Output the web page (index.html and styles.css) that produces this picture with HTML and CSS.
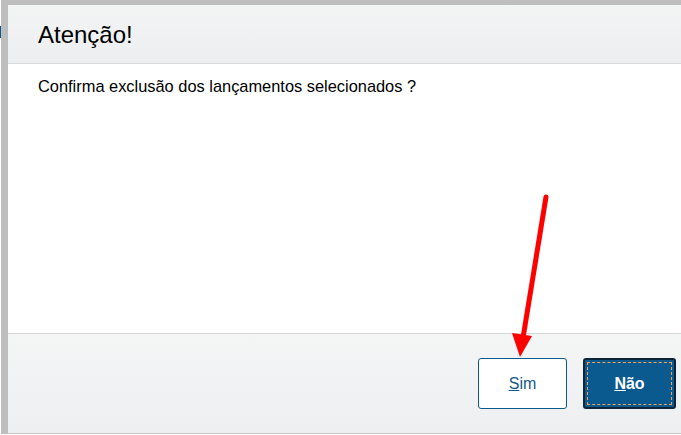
FILE: index.html
```html
<!DOCTYPE html>
<html lang="pt-BR">
<head>
  <meta charset="UTF-8">
  <title>Atenção!</title>
  <link rel="stylesheet" href="styles.css">
</head>
<body>
  <div class="page">
    <div class="edge"><span class="edge-mark"></span></div>
    <div class="dialog">
      <div class="dialog-header">
        <h1 class="title">Atenção!</h1>
      </div>
      <div class="dialog-body">
        <p class="message">Confirma exclusão dos lançamentos selecionados ?</p>
      </div>
      <div class="dialog-footer">
        <button class="btn btn-secondary"><u>S</u>im</button>
        <button class="btn btn-primary"><span class="focus-ring"><u>N</u>ão</span></button>
      </div>
    </div>
  </div>

  <!-- annotation arrow -->
  <svg class="arrow" width="681" height="435" viewBox="0 0 681 435">
    <line x1="546" y1="197" x2="523" y2="338" stroke="#ff0000" stroke-width="5" stroke-linecap="round"/>
    <polygon points="512,333 532,336 520,357" fill="#ff0000"/>
  </svg>
</body>
</html>
```

FILE: styles.css
```css
html, body {
  margin: 0;
  padding: 0;
}
body {
  font-family: "Liberation Sans", Arial, sans-serif;
  background-color: #ffffff;
  color: #000;
  width: 681px;
  height: 435px;
  overflow: hidden;
}
.page {
  display: flex;
  background-color: #bebebe;
  padding-top: 5px;
  height: 429px;
}
.edge {
  width: 1px;
  margin-top: -5px;
  background-color: #ffffff;
  margin-right: 7px;
  position: relative;
}
.edge-mark {
  position: absolute;
  top: 26px;
  left: 0;
  width: 1px;
  height: 12px;
  background-color: #0a5a8f;
}
.dialog {
  flex: 1;
  display: flex;
  flex-direction: column;
  background-color: #ffffff;
}
.dialog-header {
  height: 58px;
  background: linear-gradient(#f3f4f4, #edeef0);
  border-bottom: 1px solid #dadada;
  display: flex;
  align-items: center;
  padding-left: 30px;
}
.title {
  margin: 0;
  font-size: 24px;
  font-weight: normal;
  padding-top: 1px;
}
.dialog-body {
  height: 269px;
  padding-left: 30px;
}
.message {
  margin: 0;
  padding-top: 13px;
  font-size: 16.4px;
}
.dialog-footer {
  flex: 1;
  border-top: 1px solid #d6d6d6;
  border-bottom: 1px solid #c8c8c8;
  background: linear-gradient(#f4f5f5, #eeeff1);
  display: flex;
  justify-content: flex-end;
  align-items: flex-start;
  gap: 16px;
  padding-top: 24px;
  padding-right: 5px;
}
.btn {
  font-family: "Liberation Sans", Arial, sans-serif;
  font-size: 16px;
  height: 51px;
  border-radius: 3px;
  cursor: pointer;
  padding: 0;
}
.btn-secondary {
  width: 89px;
  background-color: #ffffff;
  border: 1px solid #0b5a8c;
  color: #14588a;
}
.btn-primary {
  width: 93px;
  background-color: #0a5a8f;
  border: 2px solid #0e2438;
  color: #ffffff;
  font-weight: bold;
  padding: 2px;
}
.focus-ring {
  display: flex;
  align-items: center;
  justify-content: center;
  height: 100%;
  box-sizing: border-box;
  border: 1px dashed #f5a25a;
}
.arrow {
  position: absolute;
  top: 0;
  left: 0;
  pointer-events: none;
}
```
